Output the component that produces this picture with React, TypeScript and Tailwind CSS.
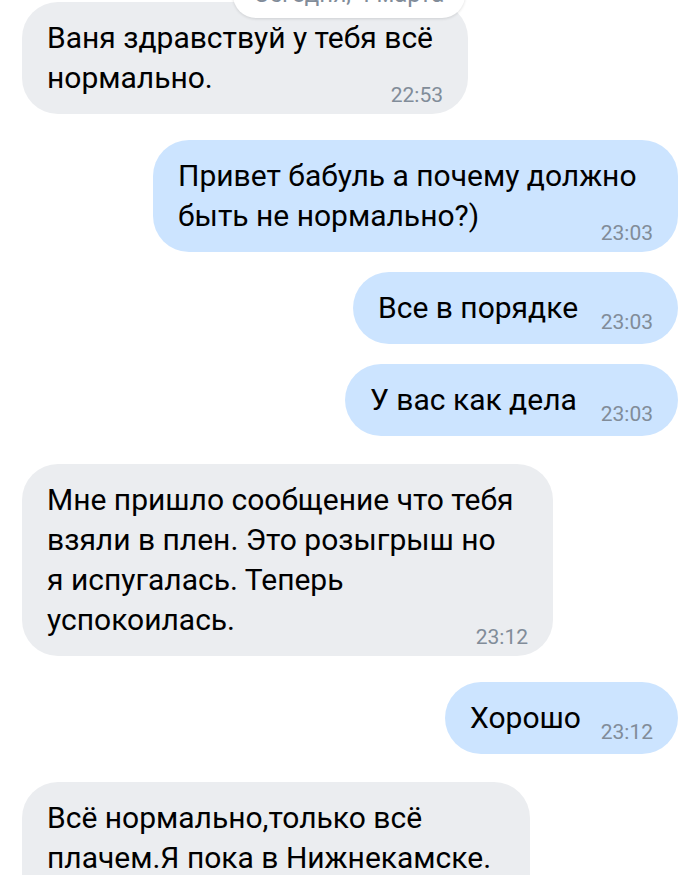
import React from "react";

const font = { fontFamily: "Roboto, 'Noto Sans', sans-serif" };

function Bubble({
  side,
  width,
  top,
  lines,
  time,
  timeShift = "mb-[-7px]",
  bottom = "pb-[16px]",
}: {
  side: "in" | "out";
  width: string;
  top: string;
  lines: string[];
  time?: string;
  timeShift?: string;
  bottom?: string;
}) {
  const bg = side === "in" ? "bg-[#ebedf0]" : "bg-[#cce4ff]";
  const align = side === "in" ? "self-start" : "self-end";
  return (
    <div
      className={`${align} ${bg} ${width} ${top} ${bottom} shrink-0 rounded-[36px] px-[25px] pt-[16px] flex items-end`}
    >
      <div className="flex-1 min-w-0 text-[30px] leading-[40px] text-black">
        {lines.map((l, i) => (
          <div key={i} className="whitespace-nowrap">
            {l}
          </div>
        ))}
      </div>
      {time && (
        <div className={`text-[21px] leading-[20px] text-[#818c99] ${timeShift} shrink-0`}>{time}</div>
      )}
    </div>
  );
}

export default function App() {
  return (
    <div className="relative w-[700px] h-[875px] overflow-hidden bg-white" style={font}>
      <div className="flex flex-col px-[22px]">
        <Bubble side="in" width="w-[446px]" top="mt-[2px]" lines={["Ваня здравствуй у тебя всё", "нормально."]} time="22:53" />
        <Bubble side="out" width="w-[525px]" top="mt-[26px]" lines={["Привет бабуль а почему должно", "быть не нормально?)"]} time="23:03" />
        <Bubble side="out" width="w-[325px]" top="mt-[20px]" lines={["Все в порядке"]} time="23:03" timeShift="mb-[-4px]" />
        <Bubble side="out" width="w-[333px]" top="mt-[20px]" lines={["У вас как дела"]} time="23:03" timeShift="mb-[-4px]" />
        <Bubble side="in" width="w-[531px]" top="mt-[28px]" lines={["Мне пришло сообщение что тебя", "взяли в плен. Это розыгрыш но", "я испугалась. Теперь", "успокоилась."]} time="23:12" />
        <Bubble side="out" width="w-[233px]" top="mt-[26px]" lines={["Хорошо"]} time="23:12" timeShift="mb-[-4px]" />
        <Bubble side="in" width="w-[508px]" top="mt-[28px]" bottom="pb-[40px]" lines={["Всё нормально,только всё", "плачем.Я пока в Нижнекамске."]} />
      </div>
      <div className="absolute left-[233px] top-[-28px] w-[232px] h-[46px] rounded-[23px] bg-white shadow-[0_1px_3px_rgba(0,0,0,0.12)] flex items-end justify-center">
        <span className="text-[24px] leading-[24px] text-[#818c99] mb-[12px]">Сегодня, 4 марта</span>
      </div>
    </div>
  );
}
